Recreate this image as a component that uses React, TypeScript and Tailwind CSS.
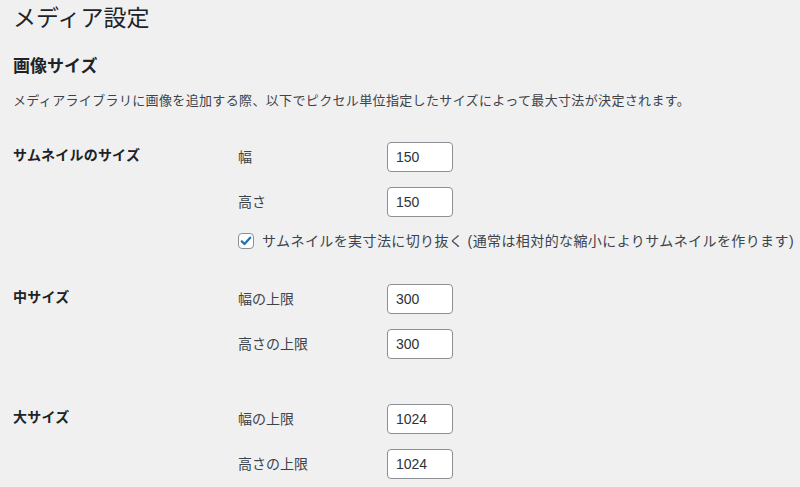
const FONT = '"Liberation Sans", "Noto Sans CJK JP", sans-serif';

type Field = { label: string; value: string };

function NumberRow({ field, first }: { field: Field; first?: boolean }) {
  return (
    <div className={`flex h-[30px] items-center ${first ? '' : 'mt-[15px]'}`}>
      <label className="w-[149px] text-[14px] leading-5 text-[#3c434a]">{field.label}</label>
      <input
        type="text"
        defaultValue={field.value}
        className="h-[30px] w-[66px] rounded-[4px] border border-[#8c8f94] bg-white pl-2 text-[14px] text-[#2c3338] outline-none"
        style={{ fontFamily: FONT }}
      />
    </div>
  );
}

function SizeSection({
  title,
  fields,
  className = '',
  children,
}: {
  title: string;
  fields: Field[];
  className?: string;
  children?: React.ReactNode;
}) {
  return (
    <div className={`flex ${className}`}>
      <div className="w-[225px] pt-[3px] text-[14px] font-bold leading-5 tracking-[0.2px] text-[#1d2327]">
        {title}
      </div>
      <div className="flex flex-col">
        {fields.map((f, i) => (
          <NumberRow key={f.label} field={f} first={i === 0} />
        ))}
        {children}
      </div>
    </div>
  );
}

export default function App() {
  return (
    <div
      className="h-[487px] w-[800px] overflow-hidden bg-[#f0f0f1] pl-[13px] text-[#1d2327]"
      style={{ fontFamily: FONT }}
    >
      <h1 className="pt-1 text-[23px] font-normal leading-[29px]">メディア設定</h1>
      <h2 className="mt-[22px] text-[17px] font-bold leading-6">画像サイズ</h2>
      <p className="mt-3 text-[13px] leading-5 tracking-[0.35px] text-[#3c434a]">
        メディアライブラリに画像を追加する際、以下でピクセル単位指定したサイズによって最大寸法が決定されます。
      </p>

      <SizeSection
        title="サムネイルのサイズ"
        className="mt-[31px]"
        fields={[
          { label: '幅', value: '150' },
          { label: '高さ', value: '150' },
        ]}
      >
        <label className="mt-4 flex h-4 items-center gap-2 text-[14px] leading-5 tracking-[0.4px] text-[#3c434a]">
          <span className="flex h-4 w-4 items-center justify-center rounded-[4px] border border-[#8c8f94] bg-white">
            <svg viewBox="0 0 16 16" className="h-[14px] w-[14px]">
              <path
                d="M3.2 8.4 L6.3 11.4 L12.8 4.2"
                fill="none"
                stroke="#2271b1"
                strokeWidth="2.6"
                strokeLinecap="round"
                strokeLinejoin="round"
              />
            </svg>
          </span>
          サムネイルを実寸法に切り抜く (通常は相対的な縮小によりサムネイルを作ります)
        </label>
      </SizeSection>

      <SizeSection
        title="中サイズ"
        className="mt-[35px]"
        fields={[
          { label: '幅の上限', value: '300' },
          { label: '高さの上限', value: '300' },
        ]}
      />

      <SizeSection
        title="大サイズ"
        className="mt-[45px]"
        fields={[
          { label: '幅の上限', value: '1024' },
          { label: '高さの上限', value: '1024' },
        ]}
      />
    </div>
  );
}
